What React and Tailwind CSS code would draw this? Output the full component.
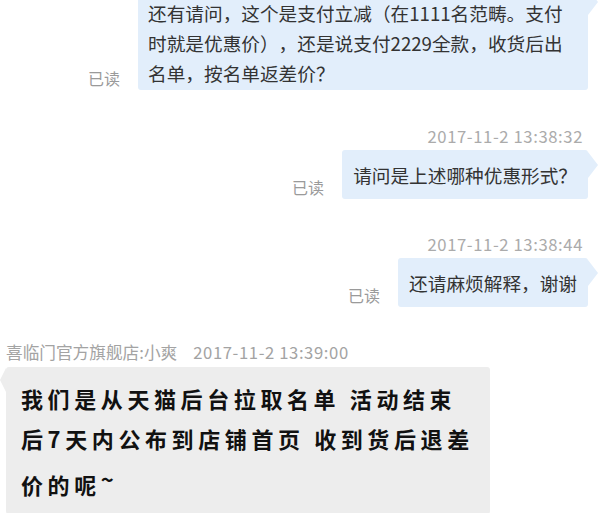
export default function App() {
  const cjk = { fontFamily: '"Noto Sans CJK SC", "Liberation Sans", sans-serif' };

  const ReadMark = () => (
    <span className="mr-[18px] text-[16px] leading-[24px] text-[#9a9a9a]">已读</span>
  );

  // Outgoing bubble tail on the right side
  const RightTail = () => (
    <span className="absolute left-full top-[2px] h-0 w-0 border-y-[13px] border-l-[10px] border-y-transparent border-l-[#e2eefb]" />
  );

  const bubbleText =
    "relative rounded-[3px] bg-[#e2eefb] text-[18.67px] leading-[30px] text-[#333] whitespace-nowrap [text-spacing-trim:space-all]";

  const stamp =
    "pr-[17px] text-right text-[16.67px] leading-[20px] tracking-[0.6px] text-[#ababab]";

  return (
    <div className="flex h-[513px] w-[600px] flex-col overflow-hidden bg-white" style={cjk}>
      {/* message 1 */}
      <div className="-mt-[13px] flex items-end justify-end pr-[12px]">
        <ReadMark />
        <div className={`${bubbleText} w-[450px] pl-[10px] pr-[8px] pt-[11px] pb-[2px]`}>
          还有请问，这个是支付立减（在1111名范畴。支付
          <br />
          时就是优惠价），还是说支付2229全款，收货后出
          <br />
          名单，按名单返差价？
          <RightTail />
        </div>
      </div>

      {/* message 2 */}
      <div className={`mt-[36px] ${stamp}`}>2017-11-2 13:38:32</div>
      <div className="mt-[4px] flex items-end justify-end pr-[12px]">
        <ReadMark />
        <div className={`${bubbleText} px-[11px] pt-[10px] pb-[9px]`}>
          请问是上述哪种优惠形式？
          <RightTail />
        </div>
      </div>

      {/* message 3 */}
      <div className={`mt-[35px] ${stamp}`}>2017-11-2 13:38:44</div>
      <div className="mt-[4px] flex items-end justify-end pr-[12px]">
        <ReadMark />
        <div className={`${bubbleText} px-[11px] pt-[10px] pb-[9px]`}>
          还请麻烦解释，谢谢
          <RightTail />
        </div>
      </div>

      {/* reply from the shop */}
      <div className="mt-[35px] flex gap-[16px] pl-[6px] text-[16.67px] leading-[20px] text-[#a3a3a3]">
        <span>喜临门官方旗舰店:小爽</span>
        <span className="tracking-[0.6px]">2017-11-2 13:39:00</span>
      </div>
      <div className="mt-[5px] pl-[6px]">
        <div className="relative w-[484px] rounded-[3px] bg-[#ededed] pl-[15px] pt-[11px] pb-[10px] text-[22px] font-bold leading-[40px] tracking-[4.6px] whitespace-nowrap text-[#111]">
          我们是从天猫后台拉取名单 活动结束
          <br />
          后7天内公布到店铺首页 收到货后退差
          <br />
          价的呢<span className="align-[6px]">~</span>
          <span className="absolute right-full top-[1px] h-0 w-0 border-y-[12px] border-r-[6px] border-y-transparent border-r-[#ededed]" />
        </div>
      </div>
    </div>
  );
}
